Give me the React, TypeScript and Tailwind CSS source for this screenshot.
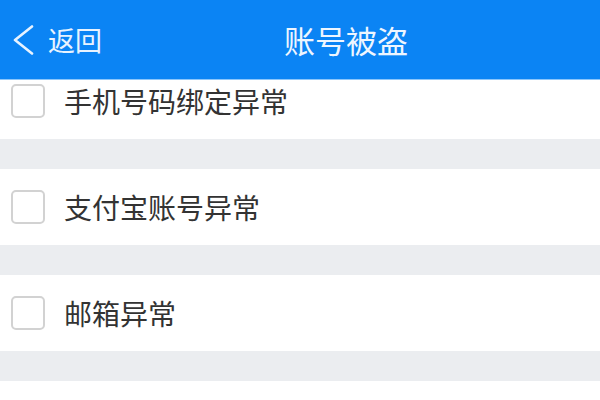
// Options shown on the "账号被盗" report screen; the last row is only peeking in at the bottom
const options = ['手机号码绑定异常', '支付宝账号异常', '邮箱异常', ''];

const cjk = { fontFamily: '"Noto Sans CJK SC", "Noto Sans", sans-serif' };

function OptionRow({ label }: { label: string }) {
  return (
    <div className="flex items-center h-[76px] bg-white px-[11px]">
      <div className="w-[34px] h-[34px] rounded-[5px] border-2 border-[#d2d2d2] bg-white shrink-0" />
      {label && <span className="ml-[19px] text-[28px] leading-none text-[#333333]">{label}</span>}
    </div>
  );
}

export default function App() {
  return (
    <div className="w-[600px] h-[400px] flex flex-col bg-[#ebedf0] overflow-hidden" style={cjk}>
      {/* Top bar */}
      <div className="h-[80px] shrink-0 flex items-center bg-[#0b84f4] border-b border-[#8cc6fb] text-white">
        <div className="flex items-center pl-[12px]">
          <svg width="22" height="30" viewBox="0 0 22 30" fill="none">
            <polyline
              points="20,1.5 3,15 20,28.5"
              stroke="#e8f3ff"
              strokeWidth="2.6"
              strokeLinecap="round"
              strokeLinejoin="round"
            />
          </svg>
          <span className="ml-[14px] text-[27px] leading-none text-[#e8f3ff]">返回</span>
        </div>
        <div className="ml-[182px] text-[31px] leading-none text-[#eef6ff]">账号被盗</div>
      </div>

      {/* Option list, scrolled slightly */}
      <div className="flex-1 overflow-hidden">
        <div className="-mt-[17px] flex flex-col gap-[30px]">
          {options.map((o, i) => (
            <OptionRow key={i} label={o} />
          ))}
        </div>
      </div>
    </div>
  );
}
